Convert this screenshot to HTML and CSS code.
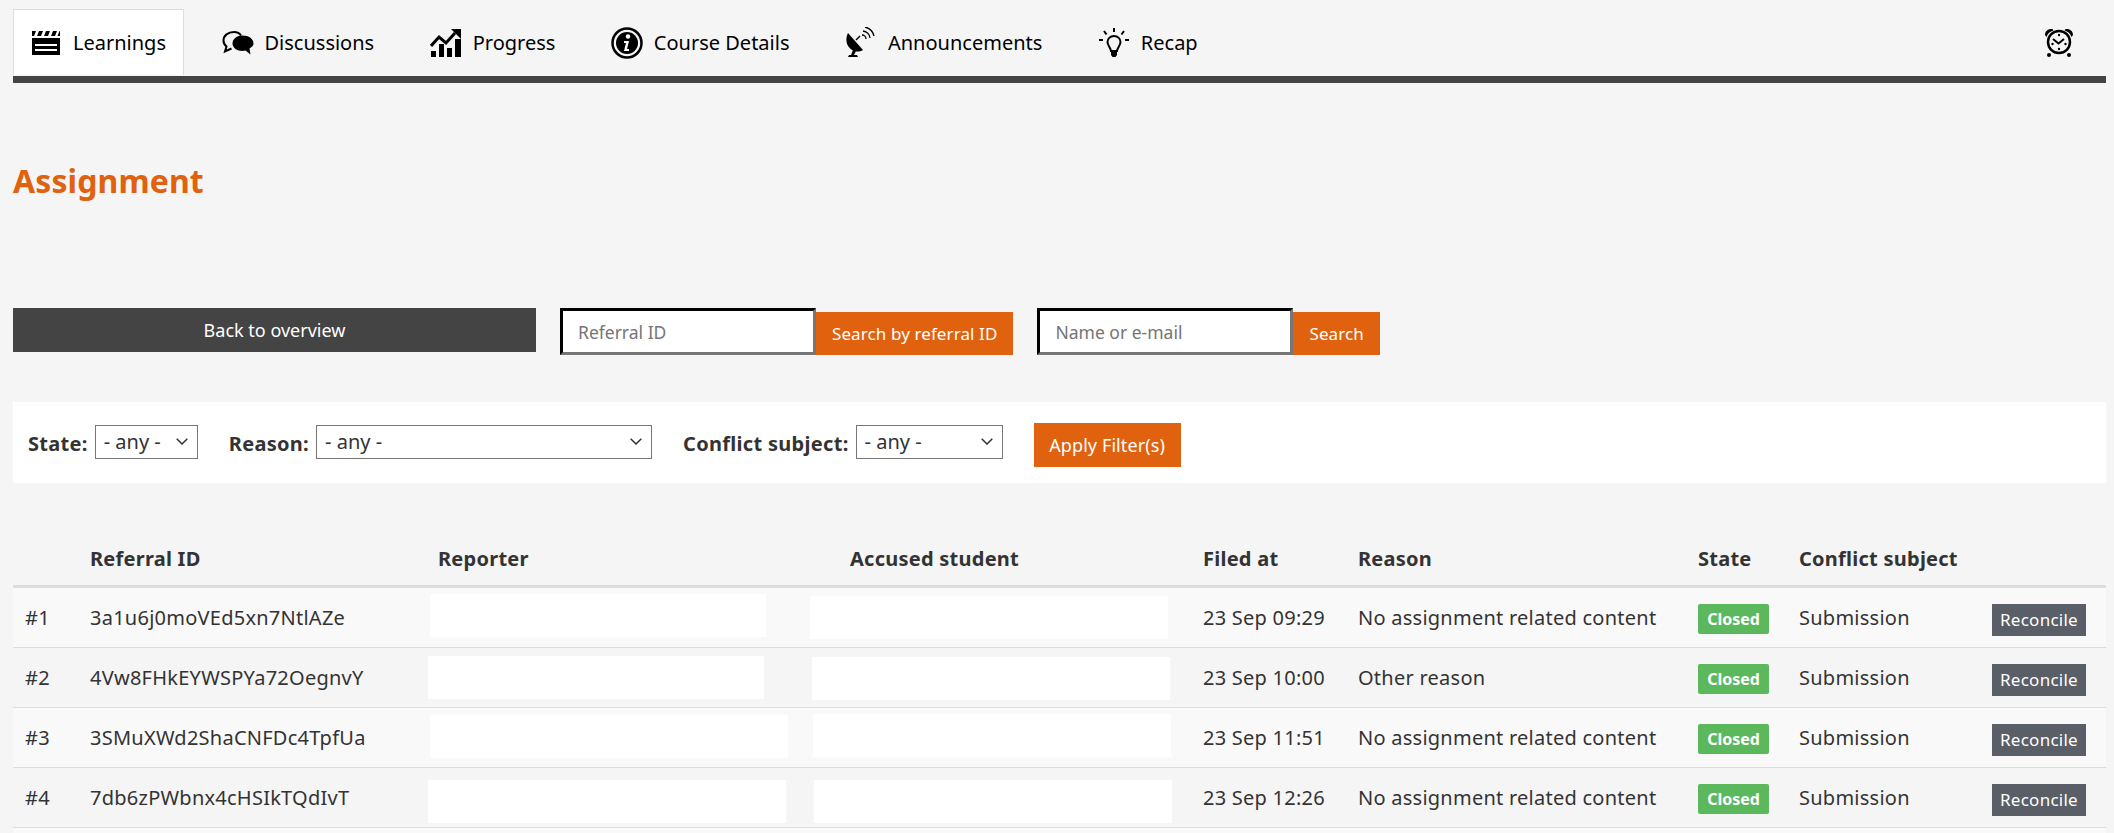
FILE: index.html
```html
<!DOCTYPE html>
<html lang="en">
<head>
  <meta charset="UTF-8">
  <title>Assignment</title>
  <link rel="stylesheet" href="styles.css">
</head>
<body>
  <nav class="tabs">
    <a class="tab active" href="#">
      <svg class="tab-icon" viewBox="0 0 32 32"><path d="M2 4h4L4 9H2zM9 4h4l-2 5H7zM16 4h4l-2 5h-4zM23 4h4l-2 5h-4zM30 4v5h-2.500l2-5z"/><path fill-rule="evenodd" d="M2 11h28v17H2zM5 17v2h22v-2zM5 22v2h22v-2z"/></svg>
      Learnings
    </a>
    <a class="tab" href="#">
      <svg class="tab-icon" viewBox="0 0 32 32"><path d="M19 8.500C17.500 6 15 5 12 5 6 5 1.500 8.500 1.500 13.500c0 2.500 1 4.500 3 6l-1.500 5 6.500-3" fill="none" stroke="#000" stroke-width="2"/><path d="M20.500 8.500c-5.500 0-10 3.500-10 8s4.500 7.500 10 7.500c1 0 2-.1 3-.4l5 3.900-1-6c2.500-1.500 4-3 4-5 0-4.500-4.500-8-11-8z"/></svg>
      Discussions
    </a>
    <a class="tab" href="#">
      <svg class="tab-icon" viewBox="0 0 32 32"><path d="M1 30v-6h5v6zM9 30V17h5v13zM17 30v-9h5v9zM25 30V12h6v18z"/><path d="M1 19l8-9 7 6 9-10" fill="none" stroke="#000" stroke-width="3"/><path d="M21 2h10v10z"/></svg>
      Progress
    </a>
    <a class="tab" href="#">
      <svg class="tab-icon" viewBox="0 0 32 32"><circle cx="16" cy="16" r="14.500" fill="none" stroke="#000" stroke-width="2.500"/><circle cx="16" cy="16" r="11"/><circle cx="17" cy="9.500" r="2.200" fill="#fff"/><path d="M13 14h5l-2 8h2v2h-5l2-8h-2z" fill="#fff"/></svg>
      Course Details
    </a>
    <a class="tab" href="#">
      <svg class="tab-icon" viewBox="0 0 32 32"><path d="M3 6c-3 6-2 13 4 17 4 2 7 2 11 0z"/><path d="M8 23l-2 5H4l-1 2h10l-1-2H9l2-4z"/><path d="M11 13l4-4" stroke="#000" stroke-width="1.500"/><path d="M17 8a4 4 0 0 1 4 4M18 4a8 8 0 0 1 7 7M20 0a12 12 0 0 1 9 9" fill="none" stroke="#000" stroke-width="1.300"/></svg>
      Announcements
    </a>
    <a class="tab" href="#">
      <svg class="tab-icon" viewBox="0 0 32 32"><path d="M16 9c-4 0-6.500 3-6.500 6 0 3.500 3 5 3.500 9h6c.5-4 3.500-5.500 3.500-9 0-3-2.500-6-6.500-6z" fill="none" stroke="#000" stroke-width="2"/><path d="M13 24h6v4l-1.500 2h-3L13 28z"/><path d="M16 1v4M6 4l2.500 3.500M26 4l-2.500 3.500M1 13h4M27 13h4" stroke="#000" stroke-width="2"/></svg>
      Recap
    </a>
    <a class="timer" href="#">
      <svg class="tab-icon" viewBox="0 0 32 32"><path d="M2 9c0-4 3-6.500 7.500-6l1 1.500C7 5.500 4.500 7.500 3.500 11zM30 9c0-4-3-6.500-7.500-6l-1 1.500c3.500 1 6 3 7 6.500z"/><circle cx="16" cy="16" r="11" fill="none" stroke="#000" stroke-width="2.500"/><path d="M10 13l5.500 4.500L21 13" fill="none" stroke="#000" stroke-width="2"/><circle cx="16" cy="9" r="1.200"/><circle cx="16" cy="23" r="1.200"/><circle cx="9.500" cy="18" r="1.200"/><circle cx="22.500" cy="18" r="1.200"/><circle cx="6" cy="29" r="2"/><circle cx="26" cy="29" r="2"/></svg>
    </a>
  </nav>

  <h1>Assignment</h1>

  <div class="search-row">
    <a class="back-btn" href="#">Back to overview</a>
    <form class="search-form">
      <input class="search-input" type="text" placeholder="Referral ID">
      <button class="btn" type="button">Search by referral ID</button>
    </form>
    <form class="search-form">
      <input class="search-input" type="text" placeholder="Name or e-mail">
      <button class="btn" type="button">Search</button>
    </form>
  </div>

  <form class="filters">
    <label class="filter-label">State:</label>
    <select class="filter-select state-select"><option>- any -</option></select>
    <label class="filter-label">Reason:</label>
    <select class="filter-select reason-select"><option>- any -</option></select>
    <label class="filter-label">Conflict subject:</label>
    <select class="filter-select subject-select"><option>- any -</option></select>
    <button class="btn apply-btn" type="button">Apply Filter(s)</button>
  </form>

  <table class="referrals">
    <colgroup>
      <col class="col-num"><col class="col-id"><col class="col-reporter"><col class="col-accused">
      <col class="col-filed"><col class="col-reason"><col class="col-state"><col class="col-subject"><col class="col-action">
    </colgroup>
    <thead>
      <tr>
        <th></th><th>Referral ID</th><th>Reporter</th><th class="accused-head">Accused student</th>
        <th>Filed at</th><th>Reason</th><th>State</th><th>Conflict subject</th><th></th>
      </tr>
    </thead>
    <tbody>
      <tr>
        <td>#1</td><td>3a1u6j0moVEd5xn7NtlAZe</td>
        <td class="masked"><div class="mask rep-1"></div></td><td class="masked"><div class="mask acc-1"></div></td>
        <td>23 Sep 09:29</td><td>No assignment related content</td>
        <td class="boxed"><span class="badge">Closed</span></td><td>Submission</td>
        <td class="boxed"><a class="reconcile" href="#">Reconcile</a></td>
      </tr>
      <tr>
        <td>#2</td><td>4Vw8FHkEYWSPYa72OegnvY</td>
        <td class="masked"><div class="mask rep-2"></div></td><td class="masked"><div class="mask acc-2"></div></td>
        <td>23 Sep 10:00</td><td>Other reason</td>
        <td class="boxed"><span class="badge">Closed</span></td><td>Submission</td>
        <td class="boxed"><a class="reconcile" href="#">Reconcile</a></td>
      </tr>
      <tr>
        <td>#3</td><td>3SMuXWd2ShaCNFDc4TpfUa</td>
        <td class="masked"><div class="mask rep-3"></div></td><td class="masked"><div class="mask acc-3"></div></td>
        <td>23 Sep 11:51</td><td>No assignment related content</td>
        <td class="boxed"><span class="badge">Closed</span></td><td>Submission</td>
        <td class="boxed"><a class="reconcile" href="#">Reconcile</a></td>
      </tr>
      <tr>
        <td>#4</td><td>7db6zPWbnx4cHSIkTQdIvT</td>
        <td class="masked"><div class="mask rep-4"></div></td><td class="masked"><div class="mask acc-4"></div></td>
        <td>23 Sep 12:26</td><td>No assignment related content</td>
        <td class="boxed"><span class="badge">Closed</span></td><td>Submission</td>
        <td class="boxed"><a class="reconcile" href="#">Reconcile</a></td>
      </tr>
    </tbody>
  </table>
  <div class="table-end"></div>
</body>
</html>
```

FILE: styles.css
```css
* {
  box-sizing: border-box;
}
body {
  font-family: "Noto Sans", Arial, sans-serif;
  font-size: 20px;
  color: #333;
  background-color: #f5f5f5;
  margin: 0;
  padding: 9px 8px 0 13px;
}
a {
  text-decoration: none;
}

/* top tabs */
.tabs {
  display: flex;
  gap: 20.5px;
  height: 74px;
  border-bottom: 7px solid #444;
}
.tab {
  display: flex;
  align-items: center;
  height: 66px;
  padding: 0 17px 0 16px;
  color: #000;
  border: 1px solid transparent;
  border-bottom: 0;
}
.tab.active {
  background: #fff;
  border-color: #ddd;
}
.tab-icon {
  width: 32px;
  height: 32px;
  margin-right: 11px;
  flex-shrink: 0;
}
.timer {
  display: flex;
  align-items: center;
  height: 66px;
  margin-left: auto;
  padding-right: 20px;
}

h1 {
  margin: 76px 0 0;
  font-size: 32px;
  line-height: 44px;
  font-weight: 700;
  letter-spacing: .1px;
  color: #e0620f;
}

/* search row */
.search-row {
  display: flex;
  align-items: flex-start;
  margin-top: 105px;
}
.back-btn {
  width: 523px;
  height: 44px;
  margin-right: 24px;
  background: #444;
  color: #fff;
  font-size: 18px;
  line-height: 45px;
  text-align: center;
}
.search-form {
  display: flex;
  align-items: flex-end;
  margin-right: 24px;
}
.search-input {
  width: 256px;
  height: 47px;
  padding: 0 15px;
  border: 3px inset #767676;
  border-color: #222 #767676 #767676 #222;
  background: #fff;
  font-family: inherit;
  font-size: 17.5px;
}
.search-input::placeholder {
  color: #757575;
}
.btn {
  height: 43px;
  padding: 0 16px;
  border: 0;
  background: #e0620f;
  color: #fff;
  font-family: inherit;
  font-size: 17px;
  letter-spacing: .1px;
}

/* filters */
.filters {
  display: flex;
  align-items: center;
  height: 81px;
  margin-top: 47px;
  padding-left: 15px;
  background: #fff;
}
.filter-label {
  font-weight: 700;
  letter-spacing: .3px;
  margin: 2px 7px 0 0;
}
.filter-select {
  appearance: none;
  height: 34px;
  padding: 0 8px;
  border: 1px solid #767676;
  border-radius: 0;
  background: #fff url("data:image/svg+xml,%3Csvg xmlns='http://www.w3.org/2000/svg' width='12' height='7'%3E%3Cpath d='M.7.7 6 6l5.300-5.300' fill='none' stroke='%23333' stroke-width='1.500'/%3E%3C/svg%3E") no-repeat right 9px center;
  color: #333;
  font-family: inherit;
  font-size: 20px;
  margin: 0 31px 2px 0;
}
.state-select {
  width: 103px;
}
.reason-select {
  width: 336px;
}
.subject-select {
  width: 147px;
}
.apply-btn {
  height: 44px;
  width: 147px;
  margin-top: 5px;
  padding: 0;
  font-size: 18px;
}

/* referral table */
.referrals {
  width: 100%;
  margin-top: 48px;
  table-layout: fixed;
  border-collapse: separate;
  border-spacing: 0;
}
.col-num { width: 65px; }
.col-id { width: 348px; }
.col-reporter { width: 380px; }
.col-accused { width: 385px; }
.col-filed { width: 155px; }
.col-reason { width: 340px; }
.col-state { width: 101px; }
.col-subject { width: 193px; }
.col-action { width: 126px; }

.referrals th {
  height: 57px;
  padding: 0 0 0 12px;
  text-align: left;
  font-weight: 700;
  letter-spacing: .25px;
  border-bottom: 3px solid #ddd;
}
.referrals th.accused-head {
  padding-left: 44px;
}
.referrals td {
  height: 60px;
  padding: 0 0 0 12px;
  letter-spacing: .25px;
  border-bottom: 1px solid #ddd;
  white-space: nowrap;
}
.referrals tbody tr:nth-child(odd) {
  background: #f9f9f9;
}
.referrals td.masked {
  padding: 0;
  vertical-align: top;
}
.referrals td.boxed {
  vertical-align: top;
  padding-top: 16px;
}
.mask {
  height: 43px;
  background: #fff;
}
.rep-1 { width: 336px; margin: 6px 0 0 4px; }
.rep-2 { width: 336px; margin: 8px 0 0 2px; }
.rep-3 { width: 358px; margin: 7px 0 0 4px; }
.rep-4 { width: 358px; margin: 12px 0 0 2px; }
.acc-1 { width: 358px; margin: 8px 0 0 4px; }
.acc-2 { width: 358px; margin: 9px 0 0 6px; }
.acc-3 { width: 358px; margin: 6px 0 0 7px; }
.acc-4 { width: 358px; margin: 12px 0 0 8px; }

.badge {
  display: block;
  width: 71px;
  height: 30px;
  background: #5cb85c;
  color: #fff;
  border-radius: 2px;
  font-size: 16px;
  font-weight: 700;
  letter-spacing: 0;
  line-height: 30px;
  text-align: center;
}
.reconcile {
  display: block;
  width: 94px;
  height: 32px;
  background: #5a5e66;
  color: #fff;
  font-size: 17px;
  line-height: 32px;
  text-align: center;
}
.table-end {
  height: 5px;
  background: #f9f9f9;
}
```
